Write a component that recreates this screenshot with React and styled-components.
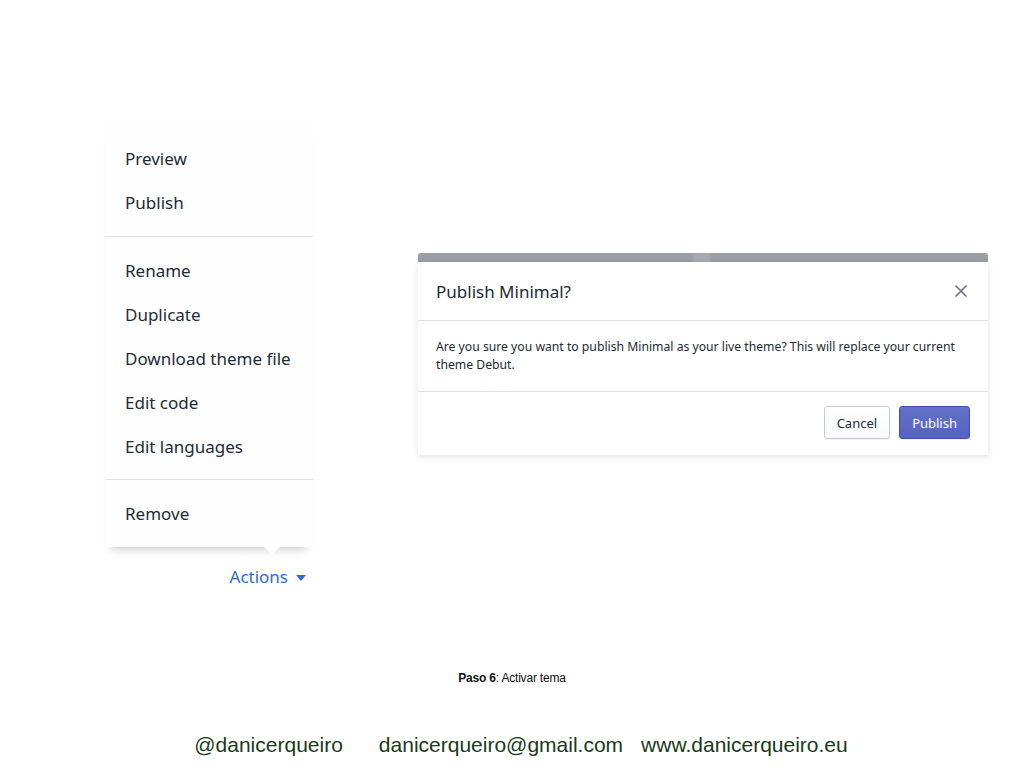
import styled, { createGlobalStyle } from "styled-components";

const GlobalStyle = createGlobalStyle`
	body {
		margin: 0;
		background: #ffffff;
		font-family: "Noto Sans", "Open Sans", sans-serif;
	}
`;

const menuSections = [
	["Preview", "Publish"],
	["Rename", "Duplicate", "Download theme file", "Edit code", "Edit languages"],
	["Remove"],
];

const App = () => {
	return (
		<Slide>
			<GlobalStyle />
			<Shots>
				<MenuColumn>
					<Menu>
						{menuSections.map((section, i) => (
							<MenuSection key={i}>
								{section.map(item => (
									<MenuItem key={item}>{item}</MenuItem>
								))}
							</MenuSection>
						))}
						<Caret />
					</Menu>
					<ActionsLink>
						Actions
						<svg width="10" height="6" viewBox="0 0 10 6">
							<path d="M0 0h10L5 6z" fill="#2c6ecb" />
						</svg>
					</ActionsLink>
				</MenuColumn>
				<ModalShot>
					<Backdrop />
					<Modal>
						<ModalHeader>
							<ModalTitle>Publish Minimal?</ModalTitle>
							<CloseButton aria-label="Close">
								<svg width="12" height="12" viewBox="0 0 12 12">
									<path
										d="M1 1l10 10M11 1L1 11"
										stroke="#637381"
										strokeWidth="1.6"
										strokeLinecap="round"
									/>
								</svg>
							</CloseButton>
						</ModalHeader>
						<ModalBody>
							Are you sure you want to publish Minimal as your live theme? This
							will replace your current theme Debut.
						</ModalBody>
						<ModalFooter>
							<Button>Cancel</Button>
							<Button primary>Publish</Button>
						</ModalFooter>
					</Modal>
				</ModalShot>
			</Shots>
			<Caption>
				<b>Paso 6</b>: Activar tema
			</Caption>
			<Footer>
				<span>@danicerqueiro</span>
				<span>danicerqueiro@gmail.com</span>
				<span>www.danicerqueiro.eu</span>
			</Footer>
		</Slide>
	);
};

export default App;

const Slide = styled.div`
	width: 1024px;
	height: 768px;
	display: flex;
	flex-direction: column;
	overflow: hidden;
`;

const Shots = styled.div`
	display: flex;
	align-items: flex-start;
	gap: 105px;
	padding: 125px 0 0 105px;
	height: 660px;
	box-sizing: border-box;
`;

const MenuColumn = styled.div`
	width: 208px;
	display: flex;
	flex-direction: column;
	align-items: flex-end;
`;

const Menu = styled.div`
	position: relative;
	width: 100%;
	background: #fefefe;
	box-shadow: 0 8px 8px -6px rgba(0, 0, 0, 0.22);
`;

const MenuSection = styled.div`
	padding: 12px 0 11px;
	& + & {
		border-top: 1px solid #dfe3e8;
	}
	&:nth-child(2) {
		padding-bottom: 10px;
	}
`;

const MenuItem = styled.div`
	height: 44px;
	line-height: 43px;
	padding-left: 20px;
	font-size: 17px;
	color: #212b36;
`;

const Caret = styled.div`
	position: absolute;
	bottom: -7px;
	left: 159px;
	width: 0;
	height: 0;
	border-left: 8px solid transparent;
	border-right: 8px solid transparent;
	border-top: 7px solid #fefefe;
`;

const ActionsLink = styled.div`
	display: flex;
	align-items: center;
	gap: 8px;
	margin-top: 18px;
	margin-right: 7px;
	font-size: 17px;
	color: #2c6ecb;
	svg {
		margin-top: 2px;
	}
`;

const ModalShot = styled.div`
	width: 570px;
	margin-top: 128px;
	display: flex;
	flex-direction: column;
`;

const Backdrop = styled.div`
	height: 9px;
	background: linear-gradient(
		to right,
		#9a9ea6 0%,
		#9a9ea6 48%,
		#a6a9b0 48.5%,
		#a6a9b0 51%,
		#9a9ea6 51.5%
	);
	border-radius: 3px 3px 0 0;
`;

const Modal = styled.div`
	background: #ffffff;
	box-shadow: 0 2px 6px rgba(0, 0, 0, 0.12);
`;

const ModalHeader = styled.div`
	height: 58px;
	display: flex;
	align-items: center;
	justify-content: space-between;
	padding: 0 21px 0 18px;
	border-bottom: 1px solid #dfe3e8;
`;

const ModalTitle = styled.h2`
	margin: 0;
	font-size: 17px;
	font-weight: 400;
	color: #212b36;
`;

const CloseButton = styled.button`
	border: none;
	background: none;
	padding: 0;
	display: flex;
`;

const ModalBody = styled.div`
	padding: 17px 10px 17px 18px;
	font-size: 12.2px;
	line-height: 18px;
	color: #212b36;
	border-bottom: 1px solid #dfe3e8;
`;

const ModalFooter = styled.div`
	display: flex;
	justify-content: flex-end;
	gap: 9px;
	padding: 14px 18px 16px;
`;

const Button = styled.button`
	height: 33px;
	padding: 0 12px;
	font-family: "Noto Sans", "Open Sans", sans-serif;
	font-size: 13px;
	border-radius: 3px;
	border: 1px solid ${({ primary }) => (primary ? "#3f4eae" : "#c4cdd5")};
	background: ${({ primary }) =>
		primary ? "linear-gradient(#6371c7, #5563c1)" : "linear-gradient(#fff, #f9fafb)"};
	color: ${({ primary }) => (primary ? "#ffffff" : "#212b36")};
	box-shadow: 0 1px 0 rgba(22, 29, 37, 0.05);
`;

const Caption = styled.div`
	margin-top: 11px;
	text-align: center;
	font-family: "Liberation Sans Narrow", "Liberation Sans", sans-serif;
	font-size: 12px;
	letter-spacing: -0.2px;
	color: #111;
	b {
		font-weight: 700;
	}
`;

const Footer = styled.div`
	margin-top: 48px;
	padding-left: 18px;
	display: flex;
	justify-content: center;
	gap: 18px;
	font-family: "Liberation Sans", Arial, sans-serif;
	font-size: 21px;
	color: #1b3a1b;
	span:first-child {
		margin-right: 18px;
	}
`;
